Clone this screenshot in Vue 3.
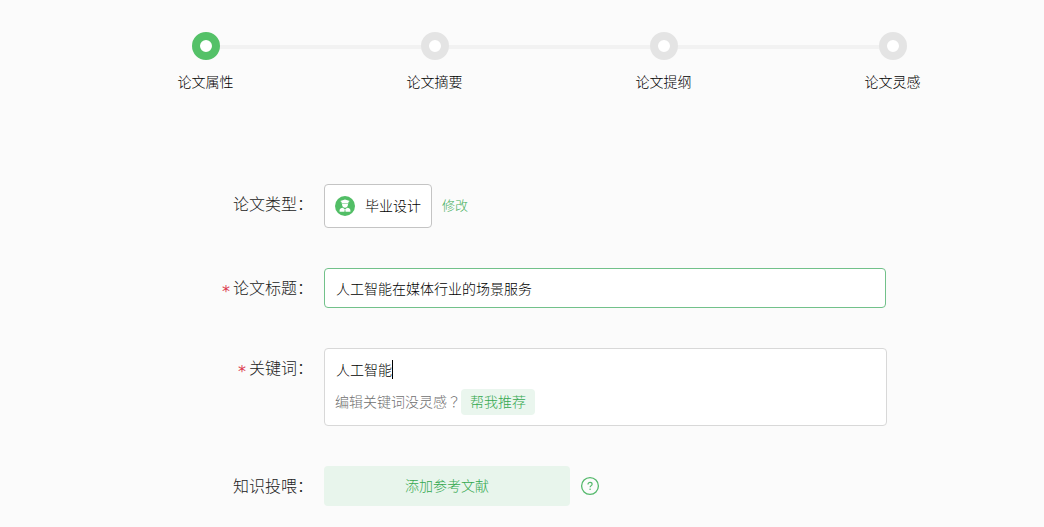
<script setup>
import { computed, ref } from 'vue'

const steps = ['论文属性', '论文摘要', '论文提纲', '论文灵感']
const current = ref(0)
const title = ref('人工智能在媒体行业的场景服务')
const keywords = ref('人工智能')
const caretLeft = computed(() => `${keywords.value.length * 14}px`)
</script>

<template>
  <main class="page">
    <ol class="steps">
      <li v-for="(step, i) in steps" :key="step" class="step" :class="{ active: i === current }">
        <span class="dot"></span>
        <span class="step-name">{{ step }}</span>
      </li>
    </ol>

    <form class="form" @submit.prevent>
      <div class="row">
        <span class="label">论文类型：</span>
        <div class="field type-field">
          <div class="type-card">
            <svg class="type-icon" viewBox="0 0 20 20" aria-hidden="true">
              <circle cx="10" cy="10" r="10" fill="#52be66" />
              <path d="M10 3.400 5.200 4.900 6.600 6v1.500h6.800V6l1.400-1.100z" fill="#fff" />
              <path d="M7 8h6c0 2.300-1.200 3.700-3 3.700S7 10.300 7 8z" fill="#fff" />
              <path d="M4.600 15.700v-1.400c0-1.500 1.400-2.300 3.300-2.600L10 13.500l2.100-1.800c1.900.3 3.300 1.100 3.300 2.600v1.400z" fill="#fff" />
              <path d="M10 13.200l-.8 2.500h1.600z" fill="#52be66" />
            </svg>
            <span class="type-name">毕业设计</span>
          </div>
          <a class="edit" href="#">修改</a>
        </div>
      </div>

      <div class="row">
        <label class="label" for="title"><span class="star">*</span>论文标题：</label>
        <div class="field">
          <input id="title" v-model="title" class="title-input" type="text" />
        </div>
      </div>

      <div class="row">
        <label class="label" for="keywords"><span class="star">*</span>关键词：</label>
        <div class="field">
          <div class="keywords-box">
            <div class="keywords-line">
              <textarea id="keywords" v-model="keywords" class="keywords" rows="1"></textarea>
              <span class="caret" :style="{ left: caretLeft }"></span>
            </div>
            <div class="hint">
              <span class="hint-text">编辑关键词没灵感<span class="mark" lang="zh-TW">？</span></span>
              <button class="suggest" type="button">帮我推荐</button>
            </div>
          </div>
        </div>
      </div>

      <div class="row">
        <span class="label">知识投喂：</span>
        <div class="field feed-field">
          <button class="add" type="button">添加参考文献</button>
          <button class="help" type="button" aria-label="帮助">
            <svg viewBox="0 0 20 20" aria-hidden="true">
              <circle cx="10" cy="10" r="8.400" fill="none" stroke="#55b96c" stroke-width="1.300" />
              <path d="M8 8.400c0-1.300.9-2 2.050-2s2.050.7 2.050 1.800c0 1.400-2 1.500-2 3.100" fill="none" stroke="#55b96c" stroke-width="1.200" />
              <circle cx="10.100" cy="13.200" r=".8" fill="#55b96c" />
            </svg>
          </button>
        </div>
      </div>
    </form>
  </main>
</template>

<style>
body {
  background: #fbfbfb;
}
</style>

<style scoped>
.page {
  padding: 32px 0 20px;
  color: #222;
  font-family: "Noto Sans CJK SC", sans-serif;
  font-size: 14px;
  font-weight: 300;
  line-height: 20px;
}
.steps {
  display: flex;
  justify-content: space-between;
  max-width: 916px;
  margin: 0 37px 0 91px;
  padding: 0;
  list-style: none;
}
.step {
  position: relative;
  flex: 1;
  display: flex;
  flex-direction: column;
  align-items: center;
  gap: 11px;
  color: #000;
}
.step:not(:last-child)::after {
  content: "";
  position: absolute;
  top: 13px;
  left: calc(50% + 14px);
  width: calc(100% - 28px);
  height: 4px;
  background: #f2f2f2;
}
.dot {
  box-sizing: border-box;
  width: 28px;
  height: 28px;
  border: 8px solid #e4e4e4;
  border-radius: 50%;
  background: #fff;
}
.active .dot {
  border-color: #54c168;
}
.form {
  display: flex;
  flex-direction: column;
  gap: 40px;
  margin-top: 93px;
}
.row {
  display: grid;
  grid-template-columns: 313px minmax(0, 563px);
  column-gap: 11px;
  align-items: start;
}
.label {
  font-size: 16px;
  line-height: 38px;
  text-align: right;
}
.star {
  margin-right: 3px;
  color: #dc3c50;
  font-family: "DejaVu Sans", sans-serif;
  font-weight: 400;
  line-height: 20px;
  vertical-align: -3px;
}
.type-field,
.feed-field {
  display: flex;
  align-items: center;
  gap: 10px;
}
.type-card {
  display: flex;
  align-items: center;
  gap: 10px;
  padding: 11px 10px;
  border: 1px solid #c4c4c4;
  border-radius: 4px;
  background: #fff;
  color: #000;
}
.type-icon {
  width: 20px;
  height: 20px;
}
.type-name,
.edit {
  padding-bottom: 2px;
  line-height: 18px;
}
.edit {
  color: #40ae58;
  font-size: 13px;
  text-decoration: none;
}
.title-input {
  box-sizing: border-box;
  display: block;
  width: calc(100% - 1px);
  height: 40px;
  padding: 0 11px;
  border: 1px solid #72c18a;
  border-radius: 4px;
  outline: none;
  background: #fff;
  color: #000;
  font: inherit;
}
.keywords-box {
  padding: 10px;
  border: 1px solid #d8d8d8;
  border-radius: 4px;
  background: #fff;
}
.keywords-line {
  position: relative;
  margin: 0 1px;
}
.keywords {
  display: block;
  width: 100%;
  height: 20px;
  padding: 0;
  border: 0;
  outline: none;
  resize: none;
  overflow: hidden;
  background: transparent;
  color: #000;
  font: inherit;
  caret-color: transparent;
}
.caret {
  position: absolute;
  top: 1px;
  width: 1px;
  height: 19px;
  background: #000;
}
.hint {
  display: flex;
  align-items: center;
  margin-top: 10px;
  color: #707070;
}
.hint-text {
  padding-bottom: 2px;
}
.mark {
  font-family: "Noto Sans CJK TC", sans-serif;
}
.suggest {
  padding: 2px 9px 4px;
  border: 0;
  border-radius: 4px;
  background: #eaf6ee;
  color: #34a84e;
  font: inherit;
}
.add {
  width: 246px;
  height: 40px;
  padding: 0 0 2px;
  border: 0;
  border-radius: 4px;
  background: #e8f5ec;
  color: #34a84e;
  font: inherit;
}
.help {
  padding: 0;
  border: 0;
  background: none;
}
.help svg {
  display: block;
  width: 20px;
  height: 20px;
}
</style>
